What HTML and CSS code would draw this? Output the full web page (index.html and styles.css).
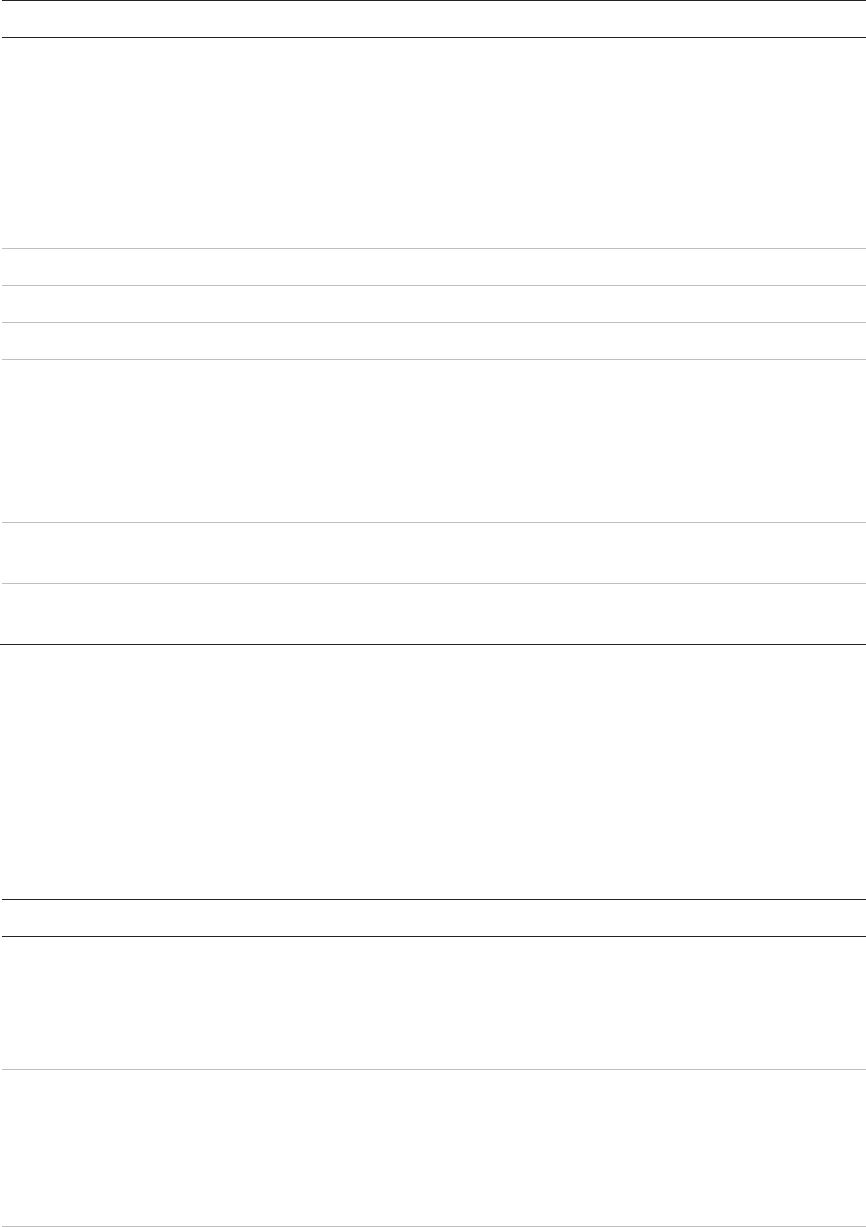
FILE: index.html
```html
<!DOCTYPE html>
<html lang="en">
<head>
<meta charset="utf-8">
<title>Tables</title>
<link rel="stylesheet" href="styles.css">
</head>
<body>
  <section class="table">
    <div class="head"></div>
    <div class="row h210"></div>
    <div class="row h36"></div>
    <div class="row h36"></div>
    <div class="row h36"></div>
    <div class="row h162"></div>
    <div class="row h60"></div>
    <div class="row last h60"></div>
  </section>
  <hr class="divider">
  <div class="spacer"></div>
  <section class="table">
    <div class="head"></div>
    <div class="row h132"></div>
    <div class="row h156"></div>
  </section>
</body>
</html>
```

FILE: styles.css
```css
html, body {
  margin: 0;
  padding: 0;
  background: #ffffff;
  font-family: "Liberation Sans", Arial, sans-serif;
}

.table {
  margin-left: 2px;
  border-top: 1px solid #222222;
}

.head {
  height: 36px;
  border-bottom: 1px solid #222222;
}

.row {
  border-bottom: 1px solid #bfbfbf;
}

.row.last {
  border-bottom: none;
}

.h36 { height: 36px; }
.h60 { height: 60px; }
.h132 { height: 132px; }
.h156 { height: 156px; }
.h162 { height: 162px; }
.h210 { height: 210px; }

.divider {
  margin: 0;
  height: 0;
  border: none;
  border-top: 1px solid #222222;
}

.spacer {
  height: 254px;
}
```
